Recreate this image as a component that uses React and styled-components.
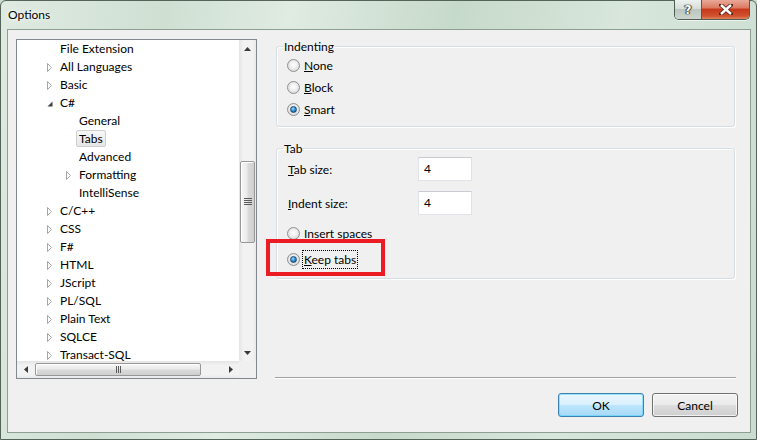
import React from "react";
import styled, { createGlobalStyle } from "styled-components";

const GlobalStyle = createGlobalStyle`
  html, body {
    margin: 0;
    padding: 0;
  }
  body {
    font-family: Lato, "Noto Sans", sans-serif;
    font-size: 12px;
    color: #000;
    background: #cbdccf;
  }
`;

const treeItems = [
  { label: "File Extension", level: 1 },
  { label: "All Languages", level: 1, exp: "closed" },
  { label: "Basic", level: 1, exp: "closed" },
  { label: "C#", level: 1, exp: "open" },
  { label: "General", level: 2 },
  { label: "Tabs", level: 2, selected: true },
  { label: "Advanced", level: 2 },
  { label: "Formatting", level: 2, exp: "closed" },
  { label: "IntelliSense", level: 2 },
  { label: "C/C++", level: 1, exp: "closed" },
  { label: "CSS", level: 1, exp: "closed" },
  { label: "F#", level: 1, exp: "closed" },
  { label: "HTML", level: 1, exp: "closed" },
  { label: "JScript", level: 1, exp: "closed" },
  { label: "PL/SQL", level: 1, exp: "closed" },
  { label: "Plain Text", level: 1, exp: "closed" },
  { label: "SQLCE", level: 1, exp: "closed" },
  { label: "Transact-SQL", level: 1, exp: "closed" },
];

const Window = styled.div`
  width: 757px;
  height: 440px;
  box-sizing: border-box;
  border: 1px solid #55645b;
  border-radius: 6px 6px 0 0;
  display: flex;
  flex-direction: column;
  background: linear-gradient(
    100deg,
    #dfeae1 0%,
    #cfe0d3 20%,
    #e0ebe2 35%,
    #c6dacb 55%,
    #d8e6db 75%,
    #c9dccf 100%
  );
`;

const TitleBar = styled.div`
  height: 28px;
  flex-shrink: 0;
  display: flex;
  justify-content: space-between;
  align-items: flex-start;
  padding: 0 6px 0 7px;
`;

const Title = styled.span`
  padding-top: 6px;
  line-height: 16px;
  font-size: 12px;
  color: #000;
  text-shadow: 0 0 6px #fff, 0 0 3px #fff;
`;

const CaptionButtons = styled.div`
  display: flex;
  margin-top: -1px;
  border: 1px solid #4d5d55;
  border-top: none;
  border-radius: 0 0 5px 5px;
  overflow: hidden;
  box-shadow: 0 1px 0 rgba(255, 255, 255, 0.6);
`;

const HelpButton = styled.div`
  width: 26px;
  height: 19px;
  display: flex;
  align-items: center;
  justify-content: center;
  border-right: 1px solid #4d5d55;
  background: linear-gradient(#eef2ef 0%, #d7ddd9 45%, #bcc5bf 50%, #cdd5cf 100%);
  font-family: "DejaVu Sans", sans-serif;
  font-weight: bold;
  font-size: 12px;
  color: #fff;
  text-shadow: 0 0 1px #2c3a33, 0 0 1px #2c3a33, 1px 0 1px #2c3a33, -1px 0 1px #2c3a33;
`;

const CloseButton = styled.div`
  width: 47px;
  height: 19px;
  display: flex;
  align-items: center;
  justify-content: center;
  background: linear-gradient(#e9a999 0%, #dc7b63 40%, #c7391b 50%, #d0542f 85%, #e3855f 100%);
`;

const Client = styled.div`
  flex: 1;
  margin: 0 5px 6px 6px;
  border: 1px solid #8d9e93;
  background: #f0f0f0;
  display: flex;
  flex-direction: column;
`;

const MainRow = styled.div`
  display: flex;
  padding: 9px 0 0 8px;
  gap: 19px;
`;

const Tree = styled.div`
  width: 241px;
  height: 340px;
  box-sizing: border-box;
  border: 1px solid #828790;
  background: #fff;
  display: grid;
  grid-template-columns: 1fr 17px;
  grid-template-rows: 1fr 17px;
`;

const TreeViewport = styled.div`
  overflow: hidden;
`;

const TreeRow = styled.div`
  height: 18px;
  display: flex;
  align-items: center;
  padding-left: ${(p) => 27 + (p.$level - 1) * 19}px;
  white-space: nowrap;
`;

const Expander = styled.span`
  width: 13px;
  height: 18px;
  box-sizing: border-box;
  padding-left: 3px;
  display: flex;
  align-items: center;
  flex-shrink: 0;
`;

const TreeLabel = styled.span`
  height: 17px;
  line-height: 15px;
  box-sizing: border-box;
  padding: 0 2px;
  border: 1px solid ${(p) => (p.$selected ? "#cfcfcf" : "transparent")};
  border-radius: 2px;
  background: ${(p) =>
    p.$selected ? "linear-gradient(#f7f7f7, #e6e6e6)" : "transparent"};
  margin-top: -1px;
`;

const VScroll = styled.div`
  display: flex;
  flex-direction: column;
  background: linear-gradient(to right, #e4e4e4, #f2f2f2 25%, #f2f2f2 80%, #e9e9e9);
`;

const HScroll = styled.div`
  display: flex;
  background: linear-gradient(#e4e4e4, #f2f2f2 25%, #f2f2f2 80%, #e9e9e9);
`;

const Corner = styled.div`
  background: #f0f0f0;
`;

const ArrowButton = styled.div`
  width: 17px;
  height: 17px;
  flex-shrink: 0;
  display: flex;
  align-items: center;
  justify-content: center;
`;

const Track = styled.div`
  flex: 1;
  display: flex;
  flex-direction: ${(p) => (p.$horizontal ? "row" : "column")};
`;

const VThumb = styled.div`
  margin: 104px 1px 0 1px;
  height: 82px;
  box-sizing: border-box;
  border: 1px solid #979797;
  border-radius: 2px;
  background: linear-gradient(to right, #f6f6f6 0%, #ebebeb 45%, #dadada 55%, #cfcfcf 100%);
  box-shadow: inset 1px 1px 0 #fff;
  display: flex;
  align-items: center;
  justify-content: center;
`;

const HThumb = styled.div`
  margin: 2px 0 2px 1px;
  width: 166px;
  box-sizing: border-box;
  border: 1px solid #979797;
  border-radius: 2px;
  background: linear-gradient(#f6f6f6 0%, #ebebeb 45%, #dadada 55%, #cfcfcf 100%);
  box-shadow: inset 1px 1px 0 #fff;
  display: flex;
  align-items: center;
  justify-content: center;
`;

const RightColumn = styled.div`
  width: 459px;
  display: flex;
  flex-direction: column;
`;

const Group = styled.fieldset`
  margin: ${(p) => p.$top || 0}px 0 0 0;
  padding: 0 8px ${(p) => p.$bottom || 6}px 6px;
  border: 1px solid #d5dfe5;
  border-radius: 3px;
  box-shadow: inset 1px 1px 0 #fff, 1px 1px 0 #fff;
  min-width: 0;
`;

const Legend = styled.legend`
  padding: 0 1px;
  line-height: 15px;
  font-size: 12px;
`;

const RadioRow = styled.label`
  position: relative;
  height: ${(p) => p.$height || 22}px;
  display: flex;
  align-items: center;
  gap: 3px;
  padding-left: 4px;
`;

const Radio = styled.span`
  position: relative;
  width: 13px;
  height: 13px;
  box-sizing: border-box;
  border-radius: 50%;
  border: 1px solid #8f8f8f;
  background: radial-gradient(circle at 50% 45%, #ffffff 0%, #f0f0f0 40%, #d8d8d8 80%, #e8e8e8 100%);
  flex-shrink: 0;

  &::after {
    content: "";
    display: ${(p) => (p.$checked ? "block" : "none")};
    position: absolute;
    left: 2px;
    top: 2px;
    width: 7px;
    height: 7px;
    box-sizing: border-box;
    border-radius: 50%;
    border: 1px solid #1c4a76;
    background: radial-gradient(circle at 40% 35%, #a6dcfa 0%, #3d9be0 40%, #0f5c9c 80%, #0a3a63 100%);
  }
`;

const Text = styled.span`
  line-height: 17px;
  padding: 0 1px;
  outline: ${(p) => (p.$focused ? "1px dotted #000" : "none")};
  outline-offset: 0;
`;

const AccessKey = styled.span`
  text-decoration: underline;
`;

const FieldRow = styled.div`
  height: 24px;
  display: flex;
  align-items: center;
  padding-left: 5px;
  margin-top: ${(p) => p.$top || 0}px;
`;

const FieldLabel = styled.span`
  width: 130px;
`;

const NumberBox = styled.div`
  width: 54px;
  height: 24px;
  box-sizing: border-box;
  border: 1px solid #e2e3ea;
  border-top-color: #c8cbd3;
  background: #fff;
  padding-left: 5px;
  line-height: 21px;
`;

const Highlight = styled.div`
  position: absolute;
  left: -17px;
  top: -9px;
  width: 119px;
  height: 37px;
  box-sizing: border-box;
  border: 4px solid #ec1c24;
  pointer-events: none;
`;

const Separator = styled.div`
  margin: auto 0 0 -1px;
  width: 461px;
  border-top: 1px solid #a0a0a0;
  border-bottom: 1px solid #fff;
`;

const ButtonRow = styled.div`
  display: flex;
  justify-content: flex-end;
  gap: 8px;
  padding: 14px 12px 0 0;
`;

const DialogButton = styled.button`
  width: 86px;
  height: 24px;
  box-sizing: border-box;
  font-family: inherit;
  font-size: 12px;
  color: #000;
  border-radius: 3px;
  border: 1px solid ${(p) => (p.$default ? "#3c7fb1" : "#707070")};
  background: ${(p) =>
    p.$default
      ? "linear-gradient(#eaf6fd 0%, #d9f0fc 49%, #bee6fd 50%, #a7d9f5 100%)"
      : "linear-gradient(#f2f2f2 0%, #ebebeb 49%, #dddddd 50%, #cfcfcf 100%)"};
  box-shadow: inset 0 0 0 1px ${(p) => (p.$default ? "#48d2fb80" : "#ffffffb0")};
  padding: 0;
`;

const Collapsed = () => (
  <svg width="6" height="9" viewBox="0 0 6 9">
    <polygon points="0.5,0.5 4.5,4.5 0.5,8.5" fill="#fff" stroke="#a6a6a6" />
  </svg>
);

const Opened = () => (
  <svg width="6" height="9" viewBox="0 0 6 9">
    <polygon points="5.5,2.5 5.5,7.5 0.5,7.5" fill="#404040" />
  </svg>
);

const Arrow = ({ dir }) => {
  const pts = {
    up: "0,4 3.5,0 7,4",
    down: "0,0 3.5,4 7,0",
    left: "4,0 0,3.5 4,7",
    right: "0,0 4,3.5 0,7",
  }[dir];
  const vertical = dir === "up" || dir === "down";
  return (
    <svg width={vertical ? 7 : 4} height={vertical ? 4 : 7}>
      <polygon points={pts} fill="#3a3a3a" />
    </svg>
  );
};

const Grip = ({ horizontal }) =>
  horizontal ? (
    <svg width="7" height="7">
      {[0, 2, 4].map((x) => (
        <line key={x} x1={x + 1.5} y1="0" x2={x + 1.5} y2="7" stroke="#5a5a5a" />
      ))}
    </svg>
  ) : (
    <svg width="8" height="8">
      {[0, 2, 4, 6].map((y) => (
        <line key={y} x1="0" y1={y + 0.5} x2="8" y2={y + 0.5} stroke="#5a5a5a" />
      ))}
    </svg>
  );

const CloseGlyph = () => (
  <svg width="14" height="11" viewBox="0 0 14 11">
    <path
      d="M2 1 L12 10 M12 1 L2 10"
      stroke="#5a2418"
      strokeWidth="4.2"
      strokeLinecap="square"
    />
    <path d="M2 1 L12 10 M12 1 L2 10" stroke="#fff" strokeWidth="2.4" />
  </svg>
);

export default function App() {
  return (
    <>
      <GlobalStyle />
      <Window>
        <TitleBar>
          <Title>Options</Title>
          <CaptionButtons>
            <HelpButton>?</HelpButton>
            <CloseButton>
              <CloseGlyph />
            </CloseButton>
          </CaptionButtons>
        </TitleBar>
        <Client>
          <MainRow>
            <Tree>
              <TreeViewport>
                {treeItems.map((item) => (
                  <TreeRow key={item.label} $level={item.level}>
                    <Expander>
                      {item.exp === "closed" && <Collapsed />}
                      {item.exp === "open" && <Opened />}
                    </Expander>
                    <TreeLabel $selected={item.selected}>{item.label}</TreeLabel>
                  </TreeRow>
                ))}
              </TreeViewport>
              <VScroll>
                <ArrowButton>
                  <Arrow dir="up" />
                </ArrowButton>
                <Track>
                  <VThumb>
                    <Grip />
                  </VThumb>
                </Track>
                <ArrowButton>
                  <Arrow dir="down" />
                </ArrowButton>
              </VScroll>
              <HScroll>
                <ArrowButton>
                  <Arrow dir="left" />
                </ArrowButton>
                <Track $horizontal>
                  <HThumb>
                    <Grip horizontal />
                  </HThumb>
                </Track>
                <ArrowButton>
                  <Arrow dir="right" />
                </ArrowButton>
              </HScroll>
              <Corner />
            </Tree>
            <RightColumn>
              <Group>
                <Legend>Indenting</Legend>
                <RadioRow>
                  <Radio />
                  <Text>
                    <AccessKey>N</AccessKey>one
                  </Text>
                </RadioRow>
                <RadioRow>
                  <Radio />
                  <Text>
                    <AccessKey>B</AccessKey>lock
                  </Text>
                </RadioRow>
                <RadioRow>
                  <Radio $checked />
                  <Text>
                    <AccessKey>S</AccessKey>mart
                  </Text>
                </RadioRow>
              </Group>
              <Group $top={14} $bottom={8}>
                <Legend>Tab</Legend>
                <FieldRow $top={1}>
                  <FieldLabel>
                    <AccessKey>T</AccessKey>ab size:
                  </FieldLabel>
                  <NumberBox>4</NumberBox>
                </FieldRow>
                <FieldRow $top={10}>
                  <FieldLabel>
                    <AccessKey>I</AccessKey>ndent size:
                  </FieldLabel>
                  <NumberBox>4</NumberBox>
                </FieldRow>
                <RadioRow style={{ marginTop: 7 }}>
                  <Radio />
                  <Text>Insert spaces</Text>
                </RadioRow>
                <RadioRow style={{ marginTop: 4 }}>
                  <Radio $checked />
                  <Text $focused>
                    <AccessKey>K</AccessKey>eep tabs
                  </Text>
                  <Highlight />
                </RadioRow>
              </Group>
              <Separator />
            </RightColumn>
          </MainRow>
          <ButtonRow>
            <DialogButton $default>OK</DialogButton>
            <DialogButton>Cancel</DialogButton>
          </ButtonRow>
        </Client>
      </Window>
    </>
  );
}
